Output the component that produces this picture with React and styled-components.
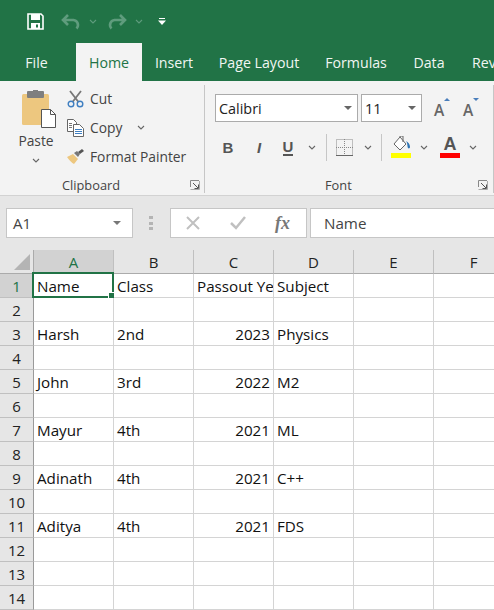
import React from 'react';
import styled, { createGlobalStyle } from 'styled-components';

const GlobalStyle = createGlobalStyle`
  html, body {
    margin: 0;
    padding: 0;
    width: 494px;
    height: 610px;
    overflow: hidden;
    background: #fff;
  }
  body {
    font-family: "Open Sans", "Noto Sans", "Liberation Sans", sans-serif;
  }
  * { box-sizing: border-box; }
`;

const Page = styled.div`
  width: 494px;
  height: 610px;
  overflow: hidden;
`;

const QuickBar = styled.div`
  height: 43px;
  background: #217346;
  display: flex;
  align-items: center;
  padding: 0 0 0 27px;
`;

const QuickIcon = styled.svg`
  display: block;
  flex: none;
  margin-left: ${p => p.$ml || 0}px;
`;

const TabRow = styled.div`
  height: 38px;
  background: #217346;
  display: flex;
  padding-left: 11px;
  overflow: hidden;
`;

const Tab = styled.div`
  flex: none;
  width: ${p => (p.$w ? `${p.$w}px` : 'auto')};
  padding: ${p => (p.$w ? '0' : '0 14px')};
  margin-left: ${p => (p.$active ? 14 : 0)}px;
  display: flex;
  align-items: center;
  justify-content: center;
  font-size: 14.2px;
  height: 38px;
  white-space: nowrap;
  background: ${p => (p.$active ? '#f3f3f3' : 'transparent')};
  color: ${p => (p.$active ? '#217346' : '#f1f6f3')};
`;

const Ribbon = styled.div`
  height: 115px;
  background: #f3f3f3;
  border-bottom: 1px solid #d2d2d2;
  display: flex;
  color: #444;
`;

const Group = styled.div`
  position: relative;
  flex: none;
  width: ${p => p.$w}px;
  height: 108px;
  margin-top: 4px;
  border-right: 1px solid #c6c6c6;
  display: flex;
  flex-direction: column;
  padding-left: ${p => p.$pl || 0}px;
`;

const GroupBody = styled.div`
  flex: 1;
  display: flex;
  min-height: 0;
`;

const GroupLabel = styled.div`
  height: 20px;
  margin-bottom: -2px;
  margin-left: ${p => p.$ml || 0}px;
  font-size: 12.8px;
  line-height: 20px;
  color: #444;
`;

const Launcher = styled.svg`
  position: absolute;
  right: ${p => p.$right}px;
  bottom: 3px;
`;

const PasteColumn = styled.div`
  width: 66px;
  margin-left: 3px;
  flex: none;
  display: flex;
  flex-direction: column;
  align-items: center;
  padding-top: 5px;
`;

const PasteLabel = styled.div`
  font-size: 13.8px;
  line-height: 18px;
  margin-top: 4px;
`;

const PasteChevron = styled.svg`
  display: block;
  margin-top: 8px;
`;

const SmallColumn = styled.div`
  display: flex;
  flex-direction: column;
  margin: -1px 0 0 -2px;
`;

const SmallButton = styled.div`
  height: 29px;
  display: flex;
  align-items: center;
  gap: 6px;
  font-size: 13.8px;
  white-space: nowrap;
`;

const SmallIcon = styled.svg`
  flex: none;
  display: block;
`;

const FontStack = styled.div`
  display: flex;
  flex-direction: column;
  padding-top: 9px;
`;

const FontRow = styled.div`
  display: flex;
  align-items: center;
  height: ${p => p.$h}px;
  margin-top: ${p => p.$mt || 0}px;
`;

const Combo = styled.div`
  width: ${p => p.$w}px;
  height: 28px;
  margin-right: 3px;
  padding: 0 5px 0 3px;
  background: #fff;
  border: 1px solid #ababab;
  display: flex;
  align-items: center;
  justify-content: space-between;
  font-size: 14.4px;
  color: #222;
`;

const Caret = styled.span`
  width: 0;
  height: 0;
  border-left: 4px solid transparent;
  border-right: 4px solid transparent;
  border-top: 4px solid ${p => p.$color || '#666'};
`;

const SizeLetter = styled.div`
  position: relative;
  width: 13px;
  margin-left: ${p => p.$ml}px;
  font-size: 15.5px;
  font-weight: 600;
  line-height: 18px;
  color: #666;
  margin-top: 4px;
`;

const SizeArrow = styled.span`
  position: absolute;
  top: -3px;
  right: -3px;
  width: 0;
  height: 0;
  border-left: 3px solid transparent;
  border-right: 3px solid transparent;
  ${p => (p.$up ? 'border-bottom: 3px solid #4a7ebb;' : 'border-top: 3px solid #4a7ebb;')}
`;

const Tool = styled.div`
  flex: none;
  width: ${p => p.$w}px;
  margin-left: ${p => p.$ml || 0}px;
  display: flex;
  align-items: center;
  justify-content: center;
  color: #555;
  font-size: 15px;
  font-family: "Liberation Sans", sans-serif;
  font-weight: ${p => (p.$bold ? 700 : 400)};
  font-style: ${p => (p.$italic ? 'italic' : 'normal')};
`;

const UnderlineLetter = styled.span`
  border-bottom: 2px solid #555;
  line-height: 15px;
  font-weight: 700;
`;

const ToolDivider = styled.div`
  flex: none;
  width: 1px;
  height: 27px;
  background: #c6c6c6;
  margin-left: ${p => p.$ml}px;
`;

const ColorTool = styled.div`
  flex: none;
  width: 20px;
  margin-left: ${p => p.$ml}px;
  display: flex;
  flex-direction: column;
  align-items: center;
`;

const Swatch = styled.div`
  width: 20px;
  height: 5px;
  background: ${p => p.$color};
`;

const ColorLetter = styled.div`
  height: 17px;
  font-family: "Liberation Sans", sans-serif;
  font-size: 18px;
  font-weight: 700;
  line-height: 17px;
  color: #555;
`;

const FormulaArea = styled.div`
  height: 54px;
  background: #e6e6e6;
  padding: 12px 0 0 6px;
  display: flex;
  align-items: flex-start;
`;

const NameBox = styled.div`
  width: 127px;
  height: 30px;
  background: #fff;
  border: 1px solid #c6c6c6;
  padding: 0 11px 0 6px;
  display: flex;
  align-items: center;
  justify-content: space-between;
  font-size: 15px;
  color: #444;
`;

const Grip = styled.div`
  flex: none;
  width: 4px;
  height: 14px;
  margin: 8px 17px 0 16px;
  display: flex;
  flex-direction: column;
  justify-content: space-between;
  span {
    display: block;
    width: 4px;
    height: 3px;
    background: #b4b4b4;
  }
`;

const FormulaButtons = styled.div`
  flex: none;
  width: 137px;
  height: 30px;
  background: #fff;
  border: 1px solid #c6c6c6;
  display: flex;
  align-items: center;
  padding-left: 14px;
`;

const CheckIcon = styled.svg`
  display: block;
  margin-left: 29px;
`;

const FxLabel = styled.span`
  margin-left: 29px;
  font-family: "Liberation Serif", serif;
  font-style: italic;
  font-weight: 700;
  font-size: 18px;
  color: #777;
`;

const FormulaInput = styled.div`
  flex: 1;
  height: 30px;
  margin-left: 3px;
  background: #fff;
  border: 1px solid #c6c6c6;
  border-right: 0;
  padding-left: 13px;
  display: flex;
  align-items: center;
  font-size: 15.2px;
  color: #444;
`;

const Sheet = styled.div`
  display: grid;
  grid-template-columns: 34px repeat(6, 80px);
  grid-auto-rows: 24px;
  background: #fff;
`;

const Corner = styled.div`
  background: #e6e6e6;
  border-right: 1px solid #ababab;
  border-bottom: 1px solid #ababab;
  position: relative;
`;

const CornerMark = styled.span`
  position: absolute;
  right: 3px;
  bottom: 3px;
  width: 0;
  height: 0;
  border-left: 16px solid transparent;
  border-bottom: 16px solid #b4b4b4;
`;

const ColumnHead = styled.div`
  background: ${p => (p.$active ? '#d2d2d2' : '#e6e6e6')};
  color: ${p => (p.$active ? '#217346' : '#222')};
  border-right: 1px solid #c0c0c0;
  border-bottom: 1px solid #ababab;
  display: flex;
  align-items: center;
  justify-content: center;
  font-size: 15px;
`;

const RowHead = styled.div`
  background: ${p => (p.$active ? '#d2d2d2' : '#e6e6e6')};
  color: ${p => (p.$active ? '#217346' : '#222')};
  border-right: 1px solid #9a9a9a;
  border-bottom: 1px solid #c0c0c0;
  display: flex;
  align-items: center;
  justify-content: center;
  font-size: 15px;
`;

const Cell = styled.div`
  position: relative;
  border-right: 1px solid #d4d4d4;
  border-bottom: 1px solid #d4d4d4;
  padding: 1px ${p => (p.$right ? 3 : 2)}px 0 3px;
  display: flex;
  align-items: center;
  justify-content: ${p => (p.$right ? 'flex-end' : 'flex-start')};
  font-size: 15.2px;
  color: #111;
  white-space: nowrap;
  overflow: ${p => (p.$selected ? 'visible' : 'hidden')};
`;

const Selection = styled.span`
  position: absolute;
  left: -2px;
  top: -2px;
  right: -1px;
  bottom: -1px;
  border: 2px solid #217346;
  pointer-events: none;
`;

const Handle = styled.span`
  position: absolute;
  right: -3px;
  bottom: -3px;
  width: 5px;
  height: 5px;
  background: #217346;
  border: 1px solid #fff;
  box-sizing: content-box;
`;

const Chevron = ({ color = '#666', ml = 0 }) => (
  <QuickIcon $ml={ml} width="8" height="5" viewBox="0 0 8 5">
    <path d="M1 1l3 3 3-3" fill="none" stroke={color} strokeWidth="1.1" />
  </QuickIcon>
);

const LauncherIcon = ({ right }) => (
  <Launcher $right={right} width="10" height="10" viewBox="0 0 10 10">
    <path d="M.5 7V.5H9" fill="none" stroke="#888" />
    <path d="M3 3l5 5M8.500 4.500v4h-4" fill="none" stroke="#555" />
    <path d="M.5 9.500h9V1" fill="none" stroke="#aaa" />
  </Launcher>
);

const columns = ['A', 'B', 'C', 'D', 'E', 'F'];

const rows = {
  1: ['Name', 'Class', 'Passout Year', 'Subject'],
  3: ['Harsh', '2nd', 2023, 'Physics'],
  5: ['John', '3rd', 2022, 'M2'],
  7: ['Mayur', '4th', 2021, 'ML'],
  9: ['Adinath', '4th', 2021, 'C++'],
  11: ['Aditya', '4th', 2021, 'FDS'],
};

const tabs = [
  { name: 'File', width: 51 },
  { name: 'Home', width: 66 },
  { name: 'Insert', width: 64 },
  { name: 'Page Layout', width: 106 },
  { name: 'Formulas', width: 88 },
  { name: 'Data', width: 58 },
  { name: 'Review' },
];

const App = () => (
  <Page>
    <GlobalStyle />
    <QuickBar>
      <QuickIcon width="17" height="17" viewBox="0 0 17 17">
        <path d="M1 1h13l2 2v13H1z" fill="none" stroke="#fff" strokeWidth="1.6" />
        <rect x="4" y="1" width="9" height="6" fill="#fff" />
        <rect x="4" y="10" width="9" height="6" fill="#fff" />
        <rect x="9" y="11.5" width="2" height="3" fill="#217346" />
      </QuickIcon>
      <QuickIcon $ml={17} width="20" height="17" viewBox="0 0 20 17">
        <path d="M7 2L2 7l5 5M2 7h10.5a5 5 0 0 1 3 8.5" fill="none" stroke="#5f9c7d" strokeWidth="2.6" />
      </QuickIcon>
      <Chevron color="#5f9c7d" ml={8} />
      <QuickIcon $ml={10} width="20" height="17" viewBox="0 0 20 17">
        <path d="M13 2l5 5-5 5M18 7H7.5a5 5 0 0 0-3 8.5" fill="none" stroke="#5f9c7d" strokeWidth="2.6" />
      </QuickIcon>
      <Chevron color="#5f9c7d" ml={8} />
      <QuickIcon $ml={15} width="8" height="7" viewBox="0 0 8 7">
        <rect x="1" y="0" width="6" height="1" fill="#fff" />
        <path d="M0 2.5h8L4 7z" fill="#fff" />
      </QuickIcon>
    </QuickBar>

    <TabRow>
      {tabs.map(tab => (
        <Tab key={tab.name} $w={tab.width} $active={tab.name === 'Home'}>{tab.name}</Tab>
      ))}
    </TabRow>

    <Ribbon>
      <Group $w={205}>
        <GroupBody>
          <PasteColumn>
            <QuickIcon $ml={4} width="36" height="38" viewBox="0 0 36 38">
              <rect x="2" y="4" width="27" height="31" rx="1.5" fill="#edc77f" />
              <rect x="7" y="1" width="17" height="7" rx="1" fill="#7f7f7f" />
              <rect x="13" y="0" width="5" height="4" fill="#7f7f7f" />
              <path d="M21.500 19.500h9l5 5v13h-14z" fill="#fff" stroke="#555" />
              <path d="M30.500 19.500v5h5" fill="none" stroke="#555" />
            </QuickIcon>
            <PasteLabel>Paste</PasteLabel>
            <PasteChevron width="8" height="5" viewBox="0 0 8 5">
              <path d="M1 1l3 3 3-3" fill="none" stroke="#666" strokeWidth="1.1" />
            </PasteChevron>
          </PasteColumn>
          <SmallColumn>
            <SmallButton>
              <SmallIcon width="17" height="18" viewBox="0 0 17 18">
                <path d="M3 1l8.500 11M14 1L5.500 12" stroke="#777" strokeWidth="1.8" fill="none" />
                <circle cx="4" cy="14" r="2.800" fill="none" stroke="#3f7fc1" strokeWidth="1.400" />
                <circle cx="13" cy="14" r="2.800" fill="none" stroke="#3f7fc1" strokeWidth="1.400" />
              </SmallIcon>
              <span>Cut</span>
            </SmallButton>
            <SmallButton>
              <SmallIcon width="17" height="18" viewBox="0 0 17 18">
                <path d="M.5 .5h6l3 3v9h-9z" fill="#fff" stroke="#666" />
                <path d="M6.500 5.500h6l4 4v8h-10z" fill="#fff" stroke="#666" />
                <path d="M8 10.500h7M8 12.500h7M8 14.500h7" stroke="#3f7fc1" />
                <path d="M2 4.500h3M2 6.500h3M2 8.500h3" stroke="#777" />
              </SmallIcon>
              <span>Copy</span>
              <Chevron ml={9} />
            </SmallButton>
            <SmallButton>
              <SmallIcon width="17" height="15" viewBox="0 0 17 15">
                <path d="M0 8l6-3 5 5-4 5C5 14 2 11 0 8z" fill="#edc77f" />
                <path d="M7 4l3-2 3 3-2 3z" fill="#777" />
                <path d="M11 3l4-3 2 2-4 3z" fill="#555" />
              </SmallIcon>
              <span>Format Painter</span>
            </SmallButton>
          </SmallColumn>
        </GroupBody>
        <GroupLabel $ml={62}>Clipboard</GroupLabel>
        <LauncherIcon right={4} />
      </Group>

      <Group $w={289} $pl={10}>
        <GroupBody>
          <FontStack>
            <FontRow $h={28}>
              <Combo $w={143}>Calibri<Caret /></Combo>
              <Combo $w={61}>11<Caret /></Combo>
              <SizeLetter $ml={9}>A<SizeArrow $up /></SizeLetter>
              <SizeLetter $ml={16}>A<SizeArrow /></SizeLetter>
            </FontRow>
            <FontRow $h={28} $mt={11}>
              <Tool $w={26} $bold>B</Tool>
              <Tool $w={26} $ml={5} $italic $bold>I</Tool>
              <Tool $w={26} $ml={3}><UnderlineLetter>U</UnderlineLetter></Tool>
              <Tool $w={8} $ml={7}><Chevron /></Tool>
              <ToolDivider $ml={10} />
              <Tool $w={17} $ml={9}>
                <svg width="17" height="17" viewBox="0 0 17 17">
                  <path d="M.5 .5h16v16H.5zM8.500 0v17M0 8.500h17" fill="none" stroke="#888" strokeDasharray="1 1" />
                  <path d="M0 16.500h17" stroke="#666" />
                </svg>
              </Tool>
              <Tool $w={8} $ml={11}><Chevron /></Tool>
              <ToolDivider $ml={9} />
              <ColorTool $ml={9}>
                <svg width="20" height="17" viewBox="0 0 20 17">
                  <path d="M9 1l6 7-6 6-6-6z" fill="#fff" stroke="#666" />
                  <path d="M9 1V0h3v6" fill="none" stroke="#666" />
                  <path d="M15 5c2 1 4 3 4 6 0 1-1 2-2 1-1-2 0-4-2-7z" fill="#2f75b5" />
                </svg>
                <Swatch $color="#ffff00" />
              </ColorTool>
              <Tool $w={8} $ml={9}><Chevron /></Tool>
              <ColorTool $ml={12}>
                <ColorLetter>A</ColorLetter>
                <Swatch $color="#ff0000" />
              </ColorTool>
              <Tool $w={8} $ml={9}><Chevron /></Tool>
            </FontRow>
          </FontStack>
        </GroupBody>
        <GroupLabel $ml={110}>Font</GroupLabel>
        <LauncherIcon right={5} />
      </Group>
    </Ribbon>

    <FormulaArea>
      <NameBox>A1<Caret $color="#777" /></NameBox>
      <Grip><span /><span /><span /></Grip>
      <FormulaButtons>
        <svg width="16" height="14" viewBox="0 0 16 14">
          <path d="M2 1l12 12M14 1L2 13" stroke="#c0c0c0" strokeWidth="2" fill="none" />
        </svg>
        <CheckIcon width="16" height="14" viewBox="0 0 16 14">
          <path d="M1 7l5 5L15 1" stroke="#c0c0c0" strokeWidth="2.500" fill="none" />
        </CheckIcon>
        <FxLabel>fx</FxLabel>
      </FormulaButtons>
      <FormulaInput>Name</FormulaInput>
    </FormulaArea>

    <Sheet>
      <Corner><CornerMark /></Corner>
      {columns.map(col => (
        <ColumnHead key={col} $active={col === 'A'}>{col}</ColumnHead>
      ))}
      {Array.from({ length: 14 }, (_, i) => i + 1).map(row => (
        <React.Fragment key={row}>
          <RowHead $active={row === 1}>{row}</RowHead>
          {columns.map((col, c) => {
            const value = rows[row] ? rows[row][c] : undefined;
            const selected = row === 1 && c === 0;
            return (
              <Cell key={col} $right={typeof value === 'number'} $selected={selected}>
                {value}
                {selected && <Selection><Handle /></Selection>}
              </Cell>
            );
          })}
        </React.Fragment>
      ))}
    </Sheet>
  </Page>
);

export default App;
